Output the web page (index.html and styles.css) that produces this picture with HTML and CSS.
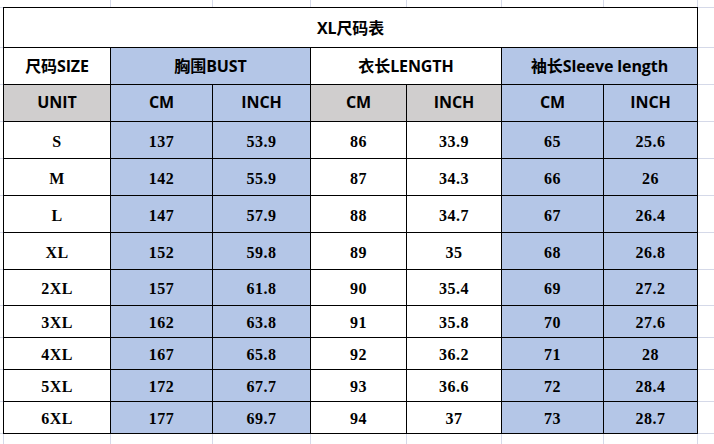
FILE: index.html
```html
<!DOCTYPE html>
<html lang="zh">
<head>
<meta charset="utf-8">
<title>XL尺码表</title>
<link rel="stylesheet" href="styles.css">
</head>
<body>
<div class="sheet">
  <div class="strip top">
    <div class="gc w111"></div><div class="gc w102"></div><div class="gc w98"></div><div class="gc w96"></div><div class="gc w95"></div><div class="gc w102"></div><div class="gc w94"></div>
  </div>
  <div class="mid">
    <div class="side left">
      <div class="gr h40"></div><div class="gr h37"></div><div class="gr h37"></div><div class="gr h37"></div><div class="gr h37"></div><div class="gr h37"></div><div class="gr h37"></div><div class="gr h36"></div><div class="gr h32"></div><div class="gr h32"></div><div class="gr h32"></div><div class="gr h32"></div>
    </div>
    <div class="tbl">
      <div class="c title span7">XL尺码表</div>

      <div class="c hd">尺码SIZE</div>
      <div class="c hd blue span2">胸围BUST</div>
      <div class="c hd span2">衣长LENGTH</div>
      <div class="c hd blue span2">袖长Sleeve length</div>

      <div class="c hd gray">UNIT</div>
      <div class="c hd blue">CM</div>
      <div class="c hd blue">INCH</div>
      <div class="c hd gray">CM</div>
      <div class="c hd gray">INCH</div>
      <div class="c hd blue">CM</div>
      <div class="c hd blue">INCH</div>

      <div class="c d">S</div><div class="c d blue">137</div><div class="c d blue">53.9</div><div class="c d">86</div><div class="c d">33.9</div><div class="c d blue">65</div><div class="c d blue">25.6</div>
      <div class="c d">M</div><div class="c d blue">142</div><div class="c d blue">55.9</div><div class="c d">87</div><div class="c d">34.3</div><div class="c d blue">66</div><div class="c d blue">26</div>
      <div class="c d">L</div><div class="c d blue">147</div><div class="c d blue">57.9</div><div class="c d">88</div><div class="c d">34.7</div><div class="c d blue">67</div><div class="c d blue">26.4</div>
      <div class="c d">XL</div><div class="c d blue">152</div><div class="c d blue">59.8</div><div class="c d">89</div><div class="c d">35</div><div class="c d blue">68</div><div class="c d blue">26.8</div>
      <div class="c d">2XL</div><div class="c d blue">157</div><div class="c d blue">61.8</div><div class="c d">90</div><div class="c d">35.4</div><div class="c d blue">69</div><div class="c d blue">27.2</div>
      <div class="c d">3XL</div><div class="c d blue">162</div><div class="c d blue">63.8</div><div class="c d">91</div><div class="c d">35.8</div><div class="c d blue">70</div><div class="c d blue">27.6</div>
      <div class="c d">4XL</div><div class="c d blue">167</div><div class="c d blue">65.8</div><div class="c d">92</div><div class="c d">36.2</div><div class="c d blue">71</div><div class="c d blue">28</div>
      <div class="c d">5XL</div><div class="c d blue">172</div><div class="c d blue">67.7</div><div class="c d">93</div><div class="c d">36.6</div><div class="c d blue">72</div><div class="c d blue">28.4</div>
      <div class="c d">6XL</div><div class="c d blue">177</div><div class="c d blue">69.7</div><div class="c d">94</div><div class="c d">37</div><div class="c d blue">73</div><div class="c d blue">28.7</div>
    </div>
    <div class="side right">
      <div class="gr h40"></div><div class="gr h37"></div><div class="gr h37"></div><div class="gr h37"></div><div class="gr h37"></div><div class="gr h37"></div><div class="gr h37"></div><div class="gr h36"></div><div class="gr h32"></div><div class="gr h32"></div><div class="gr h32"></div><div class="gr h32"></div>
    </div>
  </div>
  <div class="strip bottom">
    <div class="gc w4"></div><div class="gc w107"></div><div class="gc w102"></div><div class="gc w98"></div><div class="gc w96"></div><div class="gc w95"></div><div class="gc w102"></div><div class="gc w94"></div>
  </div>
</div>
</body>
</html>
```

FILE: styles.css
```css
* { box-sizing: border-box; }

html, body {
  margin: 0;
  padding: 0;
  background: #ffffff;
}

.sheet {
  width: 714px;
  height: 444px;
  overflow: hidden;
  display: flex;
  flex-direction: column;
}

.strip {
  display: flex;
  flex: none;
}

.strip.top { height: 7px; }
.strip.bottom { height: 10px; }

.gc {
  height: 100%;
  flex: none;
  border-right: 1px solid #d5d9e8;
}

.w4 { width: 4px; }
.w94 { width: 94px; }
.w95 { width: 95px; }
.w96 { width: 96px; }
.w98 { width: 98px; }
.w102 { width: 102px; }
.w107 { width: 107px; }
.w111 { width: 111px; }

.mid {
  display: flex;
  flex: none;
}

.side {
  display: flex;
  flex-direction: column;
  border-top: 1px solid #d5d9e8;
}

.side.left { width: 3px; }
.side.right { flex: 1; }

.gr {
  border-bottom: 1px solid #d5d9e8;
  flex: none;
}

.h40 { height: 40px; }
.h37 { height: 37px; }
.h36 { height: 36px; }
.h32 { height: 32px; }

.tbl {
  display: grid;
  grid-template-columns: 107px 102px 98px 96px 95px 102px 94px;
  grid-template-rows: 40px repeat(6, 37px) 36px repeat(4, 32px);
  border-left: 1px solid #000;
  border-top: 1px solid #000;
  background: #fff;
}

.c {
  border-right: 1px solid #000;
  border-bottom: 1px solid #000;
  display: flex;
  align-items: center;
  justify-content: center;
  color: #000;
  white-space: nowrap;
}

.span2 { grid-column: span 2; }
.span7 { grid-column: span 7; }

.title, .hd {
  font-family: "Open Sans", "Noto Sans CJK SC", sans-serif;
  font-weight: 700;
  font-size: 16px;
  letter-spacing: -0.1px;
}

.hd {
  padding-bottom: 2px;
}

.title {
  padding-bottom: 1px;
}

.d {
  font-family: "Liberation Serif", "Noto Sans CJK SC", serif;
  font-weight: 700;
  font-size: 16px;
  letter-spacing: 0.5px;
  padding-top: 3px;
}

.blue { background: #b4c6e7; }
.gray { background: #d0cece; }
```
